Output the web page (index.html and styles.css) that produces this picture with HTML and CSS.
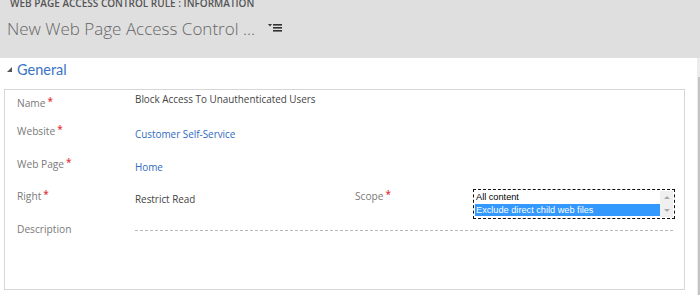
FILE: index.html
```html
<!DOCTYPE html>
<html>
<head>
<meta charset="utf-8">
<link rel="stylesheet" href="styles.css">
</head>
<body>
<div class="page">
  <header class="header">
    <div class="entity">WEB PAGE ACCESS CONTROL RULE : INFORMATION</div>
    <div class="title-row">
      <span class="title">New Web Page Access Control ...</span>
      <svg class="menu-icon" width="15" height="9" viewBox="0 0 15 9">
        <path d="M0 0 H4 L2 2.5 Z" fill="#333"/>
        <rect x="5" y="0" width="9" height="1.6" fill="#333"/>
        <rect x="5" y="3" width="9" height="1.6" fill="#333"/>
        <rect x="5" y="6" width="9" height="1.6" fill="#333"/>
      </svg>
    </div>
  </header>
  <div class="body">
    <main class="content">
      <div class="section-head">
        <svg class="tri" width="5" height="5" viewBox="0 0 5 5"><path d="M5 0 V5 H0 Z" fill="#555"/></svg>
        <span class="section-title">General</span>
      </div>
      <div class="box">
        <div class="row row-name">
          <div class="label">Name<span class="req">*</span></div>
          <div class="value">Block Access To Unauthenticated Users</div>
        </div>
        <div class="row row-web">
          <div class="label">Website<span class="req">*</span></div>
          <div class="value link">Customer Self-Service</div>
        </div>
        <div class="row row-page">
          <div class="label">Web Page<span class="req">*</span></div>
          <div class="value link">Home</div>
        </div>
        <div class="row row-right">
          <div class="label">Right<span class="req">*</span></div>
          <div class="value">Restrict Read</div>
          <div class="label scope">Scope<span class="req">*</span></div>
          <div class="select">
            <div class="options">
              <div class="opt">All content</div>
              <div class="opt selected">Exclude direct child web files</div>
            </div>
            <div class="sbar">
              <span class="arr up"></span>
              <span class="arr down"></span>
            </div>
          </div>
        </div>
        <div class="row row-desc">
          <div class="label">Description</div>
          <div class="dash"></div>
        </div>
      </div>
    </main>
    <div class="scroll"><div class="thumb"></div></div>
  </div>
</div>
</body>
</html>
```
FILE: styles.css
```css
html, body {
  margin: 0;
  padding: 0;
  background: #ffffff;
}
.page {
  width: 700px;
  height: 295px;
  overflow: hidden;
  font-family: "Open Sans", "Noto Sans", sans-serif;
}
.header {
  height: 58px;
  background: #dfdfdf;
  overflow: hidden;
  padding-left: 10px;
}
.entity {
  margin-top: -4px;
  font-size: 10px;
  font-weight: 600;
  color: #555;
  line-height: 14px;
}
.title-row {
  display: flex;
  align-items: center;
  margin-left: -3px;
  margin-top: 6px;
  height: 24px;
}
.title {
  font-size: 17px;
  font-weight: 300;
  color: #666;
}
.menu-icon {
  margin-left: 13px;
  margin-top: 1px;
}
.body {
  display: flex;
  height: 237px;
}
.content {
  flex: 0 0 697px;
  padding-top: 1px;
}
.scroll {
  flex: 0 0 3px;
  background: #ececec;
  padding-top: 19px;
}
.thumb {
  width: 2px;
  margin-left: 1px;
  height: 220px;
  background: #c4c4c4;
}
.section-head {
  display: flex;
  align-items: center;
  height: 20px;
  padding-left: 7px;
}
.tri {
  margin-top: 1px;
}
.section-title {
  margin-left: 5px;
  font-size: 14.5px;
  font-family: Lato, "Open Sans", sans-serif;
  color: #3a73c4;
}
.box {
  margin-top: 10px;
  margin-left: 4px;
  width: 681px;
  height: 201px;
  border: 1px solid #d6d6d6;
  box-sizing: border-box;
  padding-left: 12px;
}
.row {
  display: grid;
  grid-template-columns: 118px 220px 118px 202px;
  align-items: start;
  font-size: 10.2px;
  line-height: 15px;
}
.label {
  color: #7a7a7a;
  white-space: nowrap;
}
.req {
  color: #e0393b;
  margin-left: 2px;
  position: relative;
  top: -2px;
  font-size: 10px;
  font-weight: 600;
  line-height: 10px;
}
.value {
  color: #444;
  grid-column: 2 / span 3;
  white-space: nowrap;
  font-size: 9.9px;
}
.row-right .value {
  grid-column: 2;
}
.link {
  color: #2f6cbf;
}
.row-name { height: 34px; }
.row-name .label { margin-top: 6px; }
.row-name .value { margin-top: 2px; }
.row-web { height: 33px; }
.row-web .value { margin-top: 3px; }
.row-page { height: 32px; }
.row-page .value { margin-top: 3px; }
.row-right { height: 33px; }
.row-right .value { margin-top: 3px; }
.select {
  display: flex;
  margin-top: 0;
  width: 202px;
  height: 30px;
  border: 1.5px dashed #111;
  box-sizing: border-box;
  padding: 1px;
  font-family: "Liberation Sans", Arial, sans-serif;
  font-size: 9.2px;
}
.options {
  flex: 1;
}
.opt {
  height: 12.5px;
  line-height: 12.5px;
  color: #000;
  padding-left: 1px;
}
.opt.selected {
  background: #3399ff;
  color: #fff;
}
.sbar {
  flex: 0 0 13px;
  background: #f0f0f0;
  display: flex;
  flex-direction: column;
  align-items: center;
  justify-content: space-around;
}
.arr {
  width: 0;
  height: 0;
  border-left: 3px solid transparent;
  border-right: 3px solid transparent;
}
.arr.up { border-bottom: 3px solid #a8a8a8; }
.arr.down { border-top: 3px solid #a8a8a8; }
.row-desc {
  grid-template-columns: 118px 538px;
}
.dash {
  margin-top: 8px;
  border-top: 1px dashed #b8b8b8;
}
```
